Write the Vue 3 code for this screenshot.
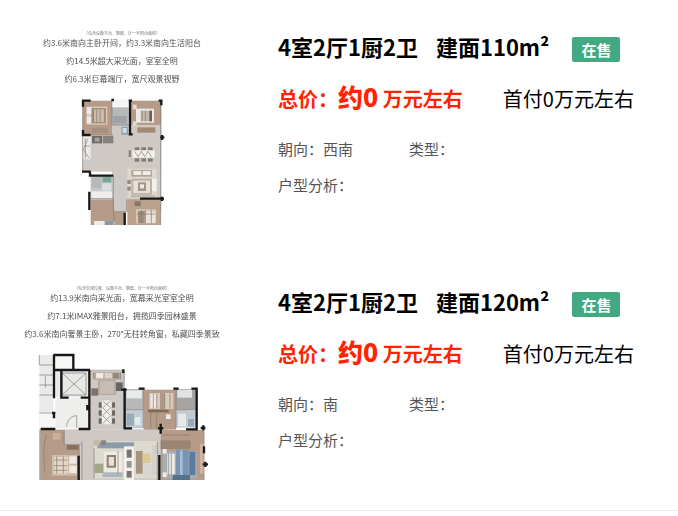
<template>
  <main class="house-list">
    <article v-for="house in houses" :key="house.area" class="house-item">
      <svg class="house-plan" viewBox="0 0 244 195" role="img" :aria-label="house.layout">
        <text class="plan-note" x="122" y="5">{{ house.note }}</text>
        <text
          v-for="(line, i) in house.captions"
          :key="line"
          class="plan-caption"
          x="122"
          :y="16 + i * 18"
        >{{ line }}</text>
        <svg
          :x="house.plan.x"
          y="60"
          :width="house.plan.width / 3"
          height="135"
          :viewBox="`0 0 ${house.plan.width} 405`"
        >
          <rect
            v-for="(r, i) in house.plan.shapes"
            :key="i"
            :x="r[0]"
            :y="r[1]"
            :width="r[2]"
            :height="r[3]"
            :fill="r[4]"
          />
          <path class="plan-line" :d="house.plan.lines" />
          <path class="plan-wall" :d="house.plan.walls" />
        </svg>
      </svg>

      <div class="house-info">
        <div class="house-title">
          <h2>{{ house.layout }}</h2>
          <h2>建面{{ house.area }}m²</h2>
          <span class="badge">在售</span>
        </div>
        <div class="house-price">
          <p class="total">总价：<strong>约0</strong> 万元左右</p>
          <p class="down">首付0万元左右</p>
        </div>
        <div class="house-meta">
          <span>朝向：{{ house.facing }}</span>
          <span>类型：</span>
          <span>户型分析：</span>
        </div>
      </div>
    </article>
  </main>
</template>

<script setup>
const wood = '#b69c88'
const floor = '#cec9c5'
const tile = '#b7b8b9'
const dark = '#6f6863'
const light = '#eeebe7'
const blue = '#8299b0'

// each shape: [x, y, width, height, fill]
const smallPlan = {
  x: 70,
  width: 330,
  shapes: [
    [38, 32, 88, 103, wood],
    [126, 52, 50, 54, tile],
    [132, 28, 42, 22, '#f3f5f5'],
    [180, 32, 94, 103, wood],
    [38, 135, 236, 110, floor],
    [126, 105, 148, 260, floor],
    // bedrooms
    [50, 50, 62, 54, '#d8ccc1'],
    [64, 54, 44, 46, '#a88e79'],
    [72, 58, 30, 38, '#cbbba9'],
    [50, 52, 14, 20, light],
    [50, 80, 14, 20, light],
    [66, 114, 48, 15, '#a6917f'],
    [198, 56, 54, 42, light],
    [212, 62, 28, 32, '#c4b6aa'],
    [238, 62, 8, 32, '#675e5c'],
    [188, 44, 12, 14, '#e2d8cb'],
    [188, 94, 12, 14, '#e2d8cb'],
    [202, 112, 54, 16, '#a18975'],
    // shaft and kitchen
    [130, 78, 40, 22, '#9da3a8'],
    [154, 110, 20, 24, '#8ba3b5'],
    [158, 114, 12, 14, '#cfdfe6'],
    [38, 138, 24, 70, light],
    [66, 138, 30, 22, dark],
    [98, 138, 32, 22, '#89807a'],
    [74, 143, 15, 12, '#a5a19e'],
    // dining
    [176, 181, 7, 20, '#8d8278'],
    [194, 172, 14, 10, '#857b77'],
    [214, 172, 14, 10, '#857b77'],
    [234, 172, 14, 10, '#857b77'],
    [188, 181, 66, 22, '#f4f0eb'],
    [194, 205, 14, 10, '#857b77'],
    [214, 205, 14, 10, '#857b77'],
    [234, 205, 14, 10, '#857b77'],
    // living
    [172, 236, 88, 86, '#ded8cf'],
    [184, 240, 62, 20, '#aca59b'],
    [190, 243, 24, 12, light],
    [218, 243, 24, 12, light],
    [184, 266, 62, 48, '#beb2a5'],
    [190, 272, 50, 37, '#e7e0d5'],
    [204, 277, 24, 26, '#a49689'],
    [210, 283, 12, 12, light],
    [246, 266, 14, 38, '#f3f0eb'],
    [172, 270, 10, 12, '#8d8986'],
    [172, 290, 10, 12, '#8d8986'],
    // bathroom
    [62, 258, 68, 68, '#c5c7c8'],
    [64, 260, 30, 34, tile],
    [98, 260, 26, 17, '#79a597'],
    [96, 280, 28, 22, '#d7dde0'],
    [64, 304, 62, 22, '#f0eeed'],
    // lower bedrooms
    [62, 328, 70, 77, wood],
    [130, 365, 34, 40, wood],
    [72, 393, 62, 12, light],
    [104, 393, 26, 12, blue],
    [172, 328, 100, 77, '#b9a18c'],
    [198, 358, 60, 42, '#d6c9ba'],
    [204, 363, 20, 36, '#a28c7c'],
    [228, 365, 28, 34, '#ece3d7'],
    [194, 334, 18, 14, '#80766c'],
  ],
  lines:
    'M38 30V245M126 30V105H176M272 32V405M38 135H130M70 58V98M80 58V98M90 58V98M216 62V94M226 62V94M46 145V205M54 145L40 180L58 205M44 168H60M194 184L204 200L214 184L224 200L234 184L244 200M62 326H130M130 258V365H170V328M132 365V405M166 365V405M214 360V400M226 360V400M244 360V400M200 372H256M182 318H255',
  walls:
    'M62 32H39V50M39 120V135H62M124 30H132M176 32H186M180 30V135M176 133H188M266 32H274V46M271 142H283M276 135V150M36 245H62M60 245V260M60 257H130M58 305V360M210 326H282M276 320V333M164 368V405',
}

const largePlan = {
  x: 30,
  width: 570,
  shapes: [
    [28, 30, 42, 225, '#ebeae8'],
    [76, 32, 50, 42, '#f6f6f5'],
    [76, 76, 100, 80, '#e8e8e6'],
    [76, 158, 100, 92, '#eeeeed'],
    [30, 202, 44, 50, '#f7f7f6'],
    [180, 78, 104, 175, floor],
    [28, 253, 368, 152, floor],
    // study and kitchen
    [190, 82, 82, 22, '#b6a99a'],
    [198, 84, 22, 16, light],
    [224, 84, 22, 16, '#dcd2c5'],
    [250, 84, 17, 16, '#94877b'],
    [204, 104, 54, 46, '#b5aaa2'],
    [210, 108, 42, 38, '#c8bcb4'],
    [184, 130, 20, 22, '#79726e'],
    [258, 112, 20, 26, '#676565'],
    // dining
    [206, 172, 9, 16, dark],
    [206, 196, 9, 16, dark],
    [206, 220, 9, 16, dark],
    [216, 166, 28, 72, '#f2eee8'],
    [246, 172, 9, 16, dark],
    [246, 196, 9, 16, dark],
    [246, 220, 9, 16, dark],
    // upper right rooms
    [286, 132, 56, 62, tile],
    [290, 136, 46, 24, '#e8ebeb'],
    [286, 194, 56, 56, '#c4ccd3'],
    [290, 206, 22, 36, '#98acba'],
    [314, 216, 18, 24, '#e3eaed'],
    [342, 134, 96, 120, wood],
    [358, 144, 72, 48, '#dacbb9'],
    [362, 148, 18, 40, light],
    [390, 144, 14, 48, '#ac9986'],
    [354, 194, 62, 8, '#826959'],
    [408, 208, 14, 14, light],
    [438, 132, 60, 62, '#a6a4a2'],
    [442, 134, 44, 24, '#e1e3e3'],
    [438, 194, 60, 54, '#c3cbd2'],
    [444, 206, 24, 38, '#e5e9ea'],
    [474, 222, 18, 22, '#93abbc'],
    // left bedroom
    [32, 255, 72, 150, wood],
    [102, 300, 48, 105, wood],
    [66, 330, 76, 62, '#d0bda8'],
    [72, 336, 42, 50, '#e3d6c6'],
    [118, 334, 22, 22, light],
    [118, 362, 22, 22, light],
    [110, 300, 36, 14, '#85715f'],
    [68, 264, 24, 20, '#c7b19c'],
    // living
    [192, 288, 192, 112, '#ddd9ce'],
    [202, 292, 110, 18, '#8a9baa'],
    [190, 284, 18, 18, '#c6b7a7'],
    [212, 286, 16, 14, '#8b847d'],
    [194, 356, 26, 28, '#a0a987'],
    [222, 320, 54, 66, '#eeeae1'],
    [230, 330, 28, 38, '#8d8072'],
    [236, 336, 16, 26, '#e8e1d5'],
    [282, 304, 30, 101, '#f4f1ed'],
    [290, 314, 15, 24, '#797472'],
    [290, 348, 15, 20, '#9a9692'],
    [290, 378, 15, 20, '#797472'],
    [318, 318, 20, 68, '#a79480'],
    [338, 326, 24, 28, '#d8c997'],
    [344, 360, 30, 34, '#d6d6d3'],
    [218, 382, 60, 14, '#a8b8bd'],
    [366, 300, 18, 90, '#d5d0cb'],
    // right bedroom
    [396, 255, 126, 150, wood],
    [392, 286, 90, 26, '#9b8673'],
    [398, 318, 102, 82, '#a3aeb7'],
    [412, 326, 26, 62, light],
    [438, 314, 38, 80, '#7894b3'],
    [450, 316, 8, 78, '#a9bdd1'],
    [478, 320, 18, 70, '#5d7c9d'],
    [398, 312, 12, 14, light],
    [398, 382, 12, 14, light],
    [428, 390, 52, 15, '#54718d'],
    [510, 296, 12, 90, '#cdb69d'],
  ],
  lines:
    'M28 30V60M28 60H70M28 90H70M28 120H70M28 150H70M46 94V128M96 84L168 150M168 84L96 150M96 84H168V150H96ZM28 204H72M110 245C110 225 125 212 140 212V248M180 76H282V250M190 82V100M272 82V104M218 168L242 188L218 212L242 236M242 168L218 188L242 212L218 236M340 132V250M438 132V250M286 194H340M438 194H498M370 146V190M380 146V190M404 146V190M420 146V190M30 255V405M102 255V298H152M156 290V405M72 345H112M72 362H112M72 376H112M80 334V386M100 334V386M50 270C40 300 40 320 44 380M192 310V400M264 318V386M382 290V405M394 255V405M416 326V390M424 326V390M436 326V390M400 270H480M522 255V405M362 194V250M380 196V250',
  walls:
    'M70 30H130V75M72 30V160M70 75H180M94 76V158H116M152 158H180M178 76V255M66 204H76M72 204V220M32 252H76M146 252H180M280 73V84M274 134H290M284 130V250H306M326 131H344M430 131H446M484 131H500V253H468M392 236V266M384 250H400M520 241V256M512 249H526M522 304V325M518 358H534M526 350V366M146 332V405M172 180V196M388 330V405',
}

const houses = [
  {
    layout: '4室2厅1厨2卫',
    area: 110,
    facing: '西南',
    note: '（包含设备平台、飘窗，计一半阳台面积）',
    captions: [
      '约3.6米南向主卧开间，约3.3米南向生活阳台',
      '约14.5米超大采光面，室室全明',
      '约6.3米巨幕端厅，宽尺观景视野',
    ],
    plan: smallPlan,
  },
  {
    layout: '4室2厅1厨2卫',
    area: 120,
    facing: '南',
    note: '（包含空调位置、设备平台、飘窗，计一半阳台面积）',
    captions: [
      '约13.9米南向采光面，宽幕采光室室全明',
      '约7.1米IMAX雅景阳台，拥揽四季园林盛景',
      '约3.6米南向奢景主卧，270°无柱转角窗，私藏四季景致',
    ],
    plan: largePlan,
  },
]
</script>

<style>
body {
  margin: 0;
  background: #fff;
}
</style>

<style scoped>
.house-list {
  font-family: 'Noto Sans CJK SC', sans-serif;
  color: #000;
  border-bottom: 1px solid #ebebeb;
}

.house-item {
  display: flex;
  gap: 34px;
  padding: 30px 0;
}

.house-plan {
  flex: none;
  width: 244px;
  height: 195px;
  filter: blur(0.5px);
}
.plan-note,
.plan-caption {
  text-anchor: middle;
  fill: #505050;
  font-size: 8px;
}
.plan-note {
  fill: #777;
  font-size: 4px;
}
.plan-line {
  fill: none;
  stroke: #817a75;
  stroke-width: 2;
}
.plan-wall {
  fill: none;
  stroke: #171717;
  stroke-width: 7;
}

.house-info {
  flex: 1;
  white-space: nowrap;
}

.house-title {
  display: flex;
  align-items: center;
  gap: 18px;
  height: 32px;
}
.house-title h2 {
  margin: 0;
  font-size: 22px;
  line-height: 32px;
}
.badge {
  margin: 7px 0 0 5px;
  padding: 0 9px;
  border-radius: 2px;
  background: #42a981;
  color: #fff;
  font-size: 15px;
  font-weight: bold;
  line-height: 25px;
}

.house-price {
  display: flex;
  align-items: baseline;
  gap: 40px;
  margin-top: 16px;
  font-size: 20px;
  line-height: 36px;
}
.house-price p {
  margin: 0;
}
.total {
  color: #ff2300;
  font-weight: bold;
}
.total strong {
  font-size: 25px;
}

.house-meta {
  display: grid;
  grid-template-columns: 131px 1fr;
  margin-top: 14px;
  color: #555;
  font-size: 15px;
  line-height: 36px;
}
</style>
